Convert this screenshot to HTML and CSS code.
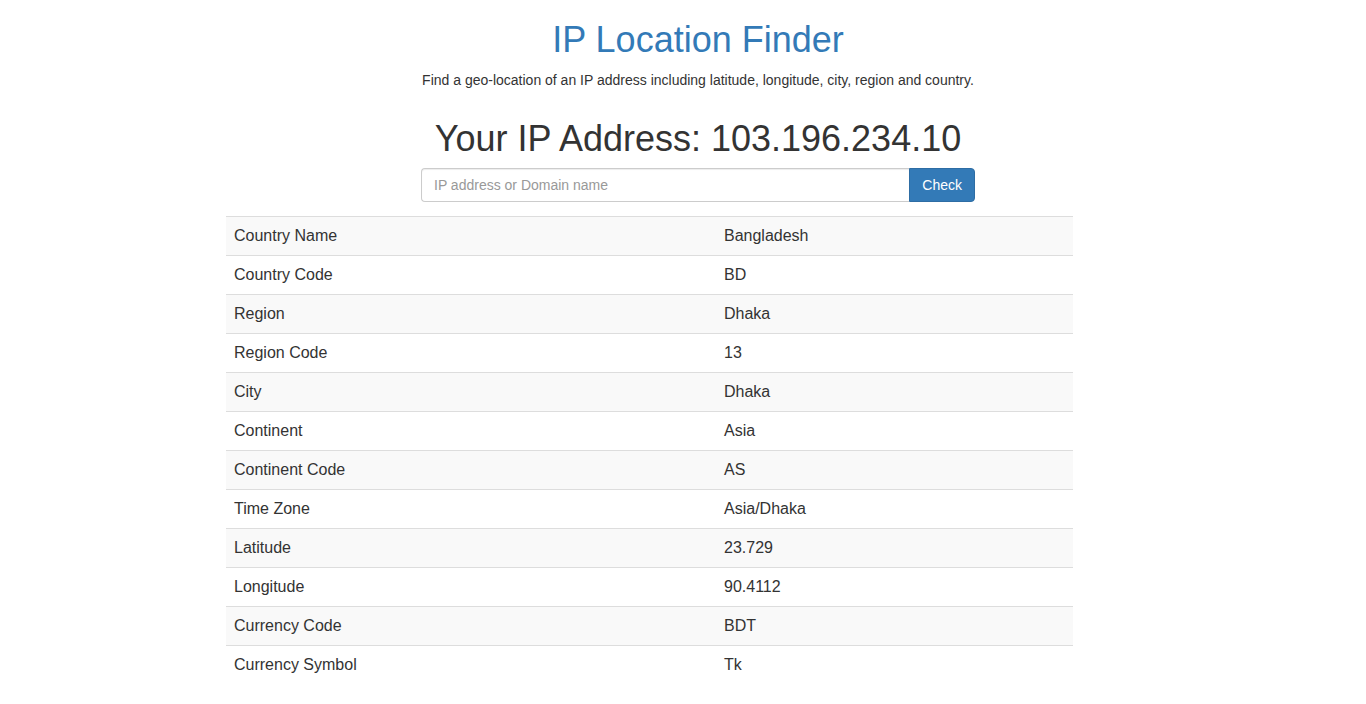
FILE: index.html
```html
<!DOCTYPE html>
<html lang="en">
<head>
<meta charset="utf-8">
<title>IP Location Finder</title>
<link rel="stylesheet" href="styles.css">
</head>
<body>
<div class="page">
  <header class="intro">
    <h1 class="title">IP Location Finder</h1>
    <p class="lead-text">Find a geo-location of an IP address including latitude, longitude, city, region and country.</p>
    <h2 class="your-ip">Your IP Address: 103.196.234.10</h2>
    <form class="search">
      <input class="search-input" type="text" placeholder="IP address or Domain name">
      <button class="search-btn" type="button">Check</button>
    </form>
  </header>
  <table class="info-table">
    <tbody>
      <tr><td class="label">Country Name</td><td>Bangladesh</td></tr>
      <tr><td class="label">Country Code</td><td>BD</td></tr>
      <tr><td class="label">Region</td><td>Dhaka</td></tr>
      <tr><td class="label">Region Code</td><td>13</td></tr>
      <tr><td class="label">City</td><td>Dhaka</td></tr>
      <tr><td class="label">Continent</td><td>Asia</td></tr>
      <tr><td class="label">Continent Code</td><td>AS</td></tr>
      <tr><td class="label">Time Zone</td><td>Asia/Dhaka</td></tr>
      <tr><td class="label">Latitude</td><td>23.729</td></tr>
      <tr><td class="label">Longitude</td><td>90.4112</td></tr>
      <tr><td class="label">Currency Code</td><td>BDT</td></tr>
      <tr><td class="label">Currency Symbol</td><td>Tk</td></tr>
    </tbody>
  </table>
</div>
</body>
</html>
```

FILE: styles.css
```css
* { box-sizing: border-box; }
html, body {
  margin: 0;
  padding: 0;
  background: #fff;
}
body {
  font-family: "Liberation Sans", Arial, Helvetica, sans-serif;
  font-size: 14px;
  line-height: 20px;
  color: #333;
}
.page {
  width: 1366px;
  padding-left: 30px;
}
.intro {
  text-align: center;
}
.title {
  margin: 20px 0 10px;
  font-size: 36px;
  line-height: 39.6px;
  font-weight: 400;
  color: #337ab7;
}
.lead-text {
  margin: 0 0 29px;
  font-size: 14px;
  line-height: 20px;
}
.your-ip {
  margin: 0 0 10px;
  font-size: 36px;
  line-height: 39.6px;
  font-weight: 400;
  color: #333;
}
.search {
  display: flex;
  width: 554px;
  margin: 0 auto;
}
.search-input {
  flex: 1;
  height: 34px;
  padding: 6px 12px;
  font-family: inherit;
  font-size: 14px;
  line-height: 20px;
  color: #555;
  background: #fff;
  border: 1px solid #ccc;
  border-right: 0;
  border-radius: 4px 0 0 4px;
  box-shadow: inset 0 1px 1px rgba(0,0,0,.075);
  outline: none;
}
.search-input::placeholder { color: #999; }
.search-btn {
  height: 34px;
  padding: 6px 12px;
  font-family: inherit;
  font-size: 14px;
  line-height: 20px;
  color: #fff;
  background: #337ab7;
  border: 1px solid #2e6da4;
  border-radius: 0 4px 4px 0;
  cursor: pointer;
}
.info-table {
  margin: 14px 0 0 196px;
  width: 847px;
  border-collapse: collapse;
  border-spacing: 0;
  font-size: 16px;
}
.info-table td {
  padding: 8px;
  line-height: 22px;
  border-top: 1px solid #ddd;
  vertical-align: top;
}
.info-table td.label { width: 490px; }
.info-table tr:nth-child(odd) { background: #f9f9f9; }
```
